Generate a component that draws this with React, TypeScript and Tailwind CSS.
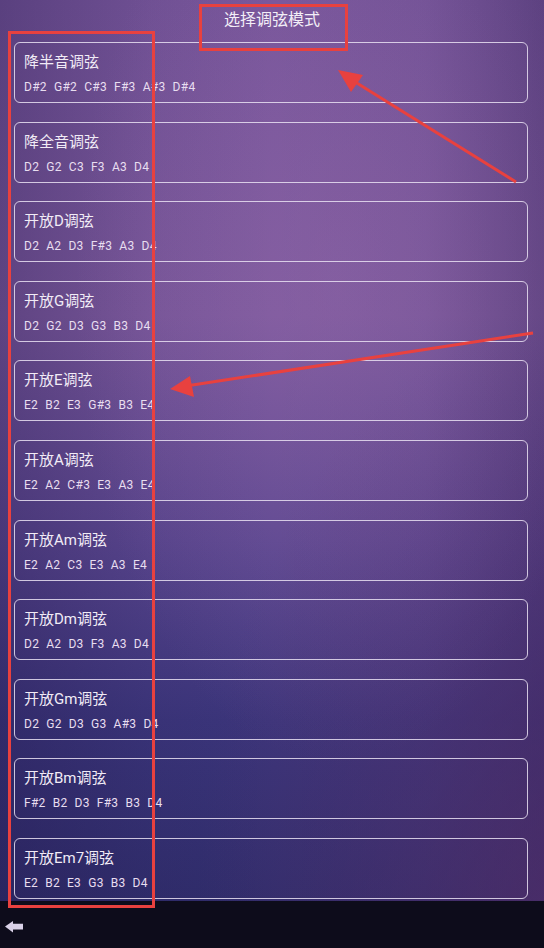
import { useState } from 'react'

type Tuning = {
  name: string
  notes: string[]
}

const tunings: Tuning[] = [
  { name: '降半音调弦', notes: ['D#2', 'G#2', 'C#3', 'F#3', 'A#3', 'D#4'] },
  { name: '降全音调弦', notes: ['D2', 'G2', 'C3', 'F3', 'A3', 'D4'] },
  { name: '开放D调弦', notes: ['D2', 'A2', 'D3', 'F#3', 'A3', 'D4'] },
  { name: '开放G调弦', notes: ['D2', 'G2', 'D3', 'G3', 'B3', 'D4'] },
  { name: '开放E调弦', notes: ['E2', 'B2', 'E3', 'G#3', 'B3', 'E4'] },
  { name: '开放A调弦', notes: ['E2', 'A2', 'C#3', 'E3', 'A3', 'E4'] },
  { name: '开放Am调弦', notes: ['E2', 'A2', 'C3', 'E3', 'A3', 'E4'] },
  { name: '开放Dm调弦', notes: ['D2', 'A2', 'D3', 'F3', 'A3', 'D4'] },
  { name: '开放Gm调弦', notes: ['D2', 'G2', 'D3', 'G3', 'A#3', 'D4'] },
  { name: '开放Bm调弦', notes: ['F#2', 'B2', 'D3', 'F#3', 'B3', 'D4'] },
  { name: '开放Em7调弦', notes: ['E2', 'B2', 'E3', 'G3', 'B3', 'D4'] },
]

const TuningCard = ({ tuning, onPick }: { tuning: Tuning; onPick: () => void }) => (
  <button
    onClick={onPick}
    className="ml-[14px] mr-[16px] flex h-[61px] shrink-0 flex-col items-start justify-start rounded-[6px] border border-[#e9e1f2]/85 pl-[9px] pt-[9px] text-left"
  >
    <div className="text-[15px] leading-[20px] text-[#f1ebf6]">{tuning.name}</div>
    <div className="mt-[7px] flex gap-[7px] text-[12px] leading-[16px] tracking-[0.3px] text-[#e8def0]">
      {tuning.notes.map((note, i) => (
        <span key={i}>{note}</span>
      ))}
    </div>
  </button>
)

// red marker strokes drawn on top of the screen
const Markup = () => (
  <svg className="pointer-events-none absolute inset-0" width="544" height="948" viewBox="0 0 544 948">
    <g fill="none" stroke="#e8413f" strokeWidth="3">
      <rect x="200.5" y="5.5" width="146" height="44" />
      <rect x="9.5" y="32.5" width="144" height="874" />
      <line x1="516" y1="182" x2="352" y2="80" />
      <line x1="533" y1="333" x2="186" y2="386" />
    </g>
    <g fill="#e8413f">
      <polygon points="338,70 363,75 351,92" />
      <polygon points="170,389 190,376 194,397" />
    </g>
  </svg>
)

const App = () => {
  const [picked, setPicked] = useState<number>()

  return (
    <div className="relative flex h-[948px] w-[544px] flex-col overflow-hidden font-['Roboto','Noto_Sans_CJK_SC',sans-serif]">
      <div className="flex flex-1 flex-col bg-[radial-gradient(ellipse_at_62%_32%,rgba(150,105,170,0.35),transparent_55%),radial-gradient(ellipse_at_100%_100%,rgba(95,50,110,0.55),transparent_45%),linear-gradient(90deg,rgba(30,20,70,0.32)_0%,rgba(30,20,70,0.08)_28%,transparent_50%,rgba(30,20,70,0.05)_78%,rgba(35,20,70,0.3)_100%),linear-gradient(180deg,#76559a_0%,#7d5a9e_35%,#5b4790_60%,#3b357b_80%,#302d6c_100%)]">
        <div className="h-[40px] pt-[9px] text-center text-[16px] leading-[22px] text-[#f3eef7]">选择调弦模式</div>
        <div className="mt-[2px] flex flex-col gap-[18.6px]">
          {tunings.map((t, i) => (
            <TuningCard key={i} tuning={t} onPick={() => setPicked(i)} />
          ))}
        </div>
      </div>
      <div className="flex h-[47px] items-center bg-[#0d0c1b] pl-[5px] pt-[4px]">
        <svg width="18" height="12" viewBox="0 0 18 12" className={picked === undefined ? '' : 'opacity-90'}>
          <polygon points="0,5.5 8,0 8,2.8 18,2.8 18,8.6 8,8.6 8,11.5" fill="#d9d1e8" />
        </svg>
      </div>
      <Markup />
    </div>
  )
}

export default App
